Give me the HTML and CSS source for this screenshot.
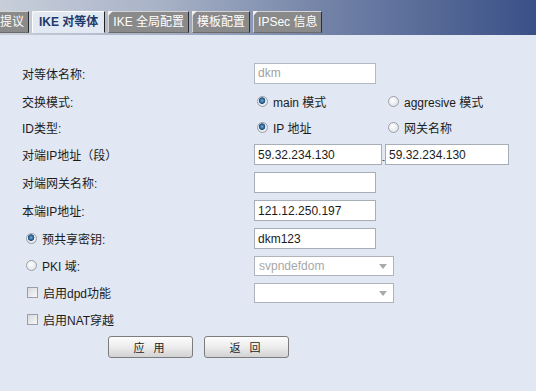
FILE: index.html
```html
<!DOCTYPE html>
<html lang="zh-CN">
<head>
    <meta charset="UTF-8">
    <title>IKE 对等体</title>
    <link rel="stylesheet" href="styles.css">
</head>
<body>

    <div class="tabbar">
        <div class="tab tab-cut">提议</div>
        <div class="tab active">IKE 对等体</div>
        <div class="tab">IKE 全局配置</div>
        <div class="tab">模板配置</div>
        <div class="tab">IPSec 信息</div>
    </div>

    <form class="peer-form">
        <label class="name">对等体名称:</label>
        <input class="field" type="text" value="dkm" disabled>
        <span></span>

        <label class="name">交换模式:</label>
        <label class="opt"><input type="radio" name="mode" checked> main 模式</label>
        <label class="opt"><input type="radio" name="mode"> aggresive 模式</label>

        <label class="name">ID类型:</label>
        <label class="opt"><input type="radio" name="idtype" checked> IP 地址</label>
        <label class="opt"><input type="radio" name="idtype"> 网关名称</label>

        <label class="name">对端IP地址（段）</label>
        <div class="range">
            <input class="field wide" type="text" value="59.32.234.130">
            <span class="dash">-</span>
            <input class="field wide2" type="text" value="59.32.234.130">
        </div>

        <label class="name">对端网关名称:</label>
        <input class="field" type="text" value="">
        <span></span>

        <label class="name">本端IP地址:</label>
        <input class="field" type="text" value="121.12.250.197">
        <span></span>

        <label class="name sub"><input type="radio" name="auth" checked> 预共享密钥:</label>
        <input class="field" type="text" value="dkm123">
        <span></span>

        <label class="name sub"><input type="radio" name="auth"> PKI 域:</label>
        <div class="select disabled"><span>svpndefdom</span></div>
        <span></span>

        <label class="name sub"><input type="checkbox"> 启用dpd功能</label>
        <div class="select"><span></span></div>
        <span></span>

        <label class="name sub"><input type="checkbox"> 启用NAT穿越</label>
        <span></span>
        <span></span>
    </form>

    <div class="actions">
        <button class="btn">应 用</button>
        <button class="btn">返 回</button>
    </div>

</body>
</html>
```

FILE: styles.css
```css
body {
    margin: 0;
    background: #e1e8f3;
    font-family: "Liberation Sans", "Noto Sans CJK SC", sans-serif;
    font-size: 12px;
    color: #1c1c1c;
}

/* tab strip */
.tabbar {
    height: 35px;
    box-sizing: border-box;
    padding-top: 11px;
    display: flex;
    align-items: flex-start;
    background: linear-gradient(to right, #c8cfdb 0%, #a8b2c7 30%, #7484a8 60%, #3a5087 100%);
}
.tab {
    position: relative;
    height: 22px;
    box-sizing: border-box;
    line-height: 20px;
    padding: 0 4px;
    margin-right: 3px;
    font-size: 12px;
    color: #fff;
    background: #8a8a8a;
    border: 1px solid;
    border-color: #d4d4d4 #2e2e2e #6a6a6a #d4d4d4;
    white-space: nowrap;
}
.tab::before {
    content: "";
    position: absolute;
    left: -1px;
    top: -1px;
    border-top: 5px solid #f2f2f2;
    border-right: 5px solid transparent;
}
.tab-cut {
    padding-left: 0;
    border-left: none;
}
.tab-cut::before {
    display: none;
}
.tab.active {
    background: #e3e9f3;
    color: #1d3a6c;
    font-weight: bold;
    border-color: #fff #222 #e3e9f3 #fff;
    padding: 0 6px;
}

/* form grid */
.peer-form {
    display: grid;
    grid-template-columns: 232px 131px 1fr;
    grid-template-rows: 30px 27px 25px 29px 27px 29px 27px 27px 27px 27px;
    align-items: center;
    padding: 23px 0 0 22px;
    margin: 0;
}
.name {
    display: flex;
    align-items: center;
    white-space: nowrap;
}
.name.sub {
    padding-left: 4px;
}
.opt {
    display: flex;
    align-items: center;
    padding-left: 3px;
    white-space: nowrap;
}
.range {
    grid-column: 2 / 4;
    display: flex;
    align-items: flex-end;
}
.dash {
    width: 3px;
    font-size: 9px;
    line-height: 9px;
    color: #333;
    text-align: center;
}

.field {
    width: 122px;
    height: 21px;
    box-sizing: border-box;
    border: 1px solid #a8aeb6;
    background: #fff;
    padding: 0 3px;
    font-family: "Liberation Sans", "Noto Sans CJK SC", sans-serif;
    font-size: 12px;
    color: #1c1c1c;
    margin: 0;
}
.field:disabled {
    color: #a0a0a0;
    border-color: #b3b9c1;
}
.field.wide {
    width: 128px;
}
.field.wide2 {
    width: 124px;
}

.select {
    position: relative;
    width: 140px;
    height: 20px;
    box-sizing: border-box;
    border: 1px solid #b0b4ba;
    background: #fff;
    padding: 0 4px;
    line-height: 18px;
    color: #a8a8a8;
}
.select::after {
    content: "";
    position: absolute;
    right: 6px;
    top: 7px;
    border-top: 5px solid #a9a9a9;
    border-left: 4px solid transparent;
    border-right: 4px solid transparent;
}

/* radio and checkbox */
input[type="radio"] {
    appearance: none;
    width: 11px;
    height: 11px;
    margin: 0 5px 0 0;
    border-radius: 50%;
    border: 1px solid #9aa0a8;
    background: radial-gradient(circle at 40% 35%, #ffffff, #d9dce1);
    box-sizing: border-box;
}
input[type="radio"]:checked {
    background: radial-gradient(circle at 45% 40%, #7fb0d8 0, #2c6a9c 2px, #1d4f7a 3px, #eef0f3 3.6px, #d4d8de 100%);
}
input[type="checkbox"] {
    appearance: none;
    width: 11px;
    height: 11px;
    margin: 0 5px 0 1px;
    border: 1px solid #9a9ea5;
    background: linear-gradient(135deg, #d8dade, #f7f7f8);
    box-sizing: border-box;
}

/* buttons */
.actions {
    display: flex;
    gap: 11px;
    padding: 3px 0 0 108px;
}
.btn {
    width: 85px;
    height: 22px;
    border: 1px solid #7c7c7c;
    border-radius: 3px;
    background: linear-gradient(#fdfdfd 0%, #ececec 50%, #d2d2d2 100%);
    font-family: "Liberation Sans", "Noto Sans CJK SC", sans-serif;
    font-size: 11px;
    letter-spacing: 3px;
    color: #222;
    padding: 0;
}
```
